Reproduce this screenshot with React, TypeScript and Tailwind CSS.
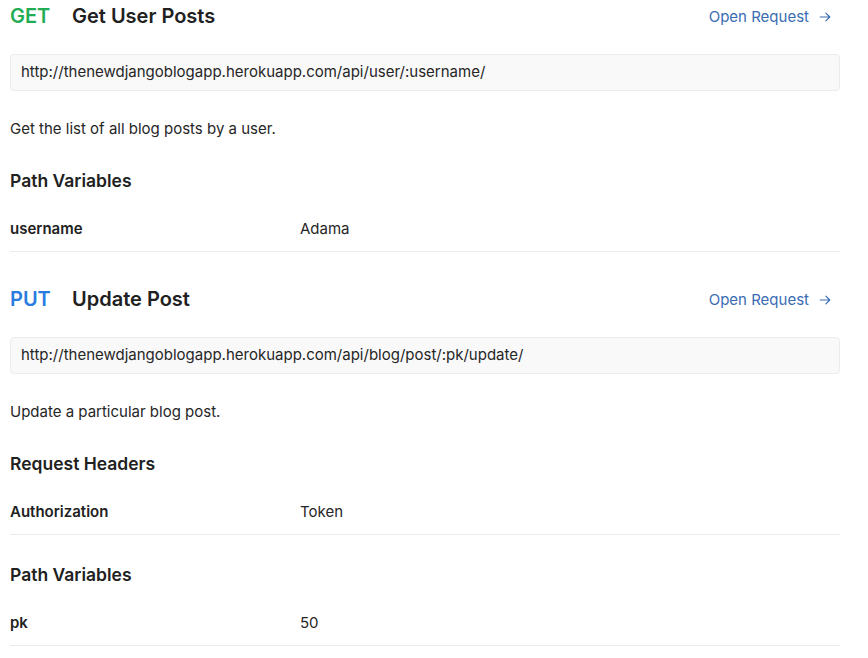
import React from 'react';

type Row = { key: string; value: string };

type Endpoint = {
  method: 'GET' | 'PUT';
  name: string;
  url: string;
  description: string;
  groups: { title: string; rows: Row[] }[];
};

const endpoints: Endpoint[] = [
  {
    method: 'GET',
    name: 'Get User Posts',
    url: 'http://thenewdjangoblogapp.herokuapp.com/api/user/:username/',
    description: 'Get the list of all blog posts by a user.',
    groups: [{ title: 'Path Variables', rows: [{ key: 'username', value: 'Adama' }] }],
  },
  {
    method: 'PUT',
    name: 'Update Post',
    url: 'http://thenewdjangoblogapp.herokuapp.com/api/blog/post/:pk/update/',
    description: 'Update a particular blog post.',
    groups: [
      { title: 'Request Headers', rows: [{ key: 'Authorization', value: 'Token' }] },
      { title: 'Path Variables', rows: [{ key: 'pk', value: '50' }] },
    ],
  },
];

const ArrowRight = () => (
  <svg className="h-[14px] w-[14px]" viewBox="0 0 16 16" fill="none" stroke="currentColor" strokeWidth={1.3}>
    <path d="M2.5 8h11M9 3.5 13.5 8 9 12.5" strokeLinecap="round" strokeLinejoin="round" />
  </svg>
);

const EndpointBlock = ({ ep, first }: { ep: Endpoint; first: boolean }) => (
  <section className={first ? '' : 'mt-[31px]'}>
    <div className="flex h-8 items-center justify-between">
      <div className="flex items-center">
        <span
          className={
            'w-[62px] text-[20px] font-semibold ' +
            (ep.method === 'GET' ? 'text-[#22ad55]' : 'text-[#2a7be0]')
          }
        >
          {ep.method}
        </span>
        <h2 className="text-[20px] font-semibold text-[#212121]">{ep.name}</h2>
      </div>
      <a className="mr-[8px] flex items-center gap-[9px] pt-[2px] text-[15px] text-[#3a6cb4]">
        Open Request
        <ArrowRight />
      </a>
    </div>

    <div className="mt-[22px] flex h-[37px] items-center rounded-[4px] border border-[#ececec] bg-[#f9f9f9] px-[10px] text-[15px] text-[#262626]">
      {ep.url}
    </div>

    <p className="mt-[28px] text-[15px] leading-5 text-[#262626]">{ep.description}</p>

    {ep.groups.map((g, i) => (
      <div key={g.title} className={i === 0 ? 'mt-[30px]' : 'mt-[28px]'}>
        <h3 className="text-[17.5px] font-semibold leading-6 text-[#212121]">{g.title}</h3>
        {g.rows.map((r) => (
          <div
            key={r.key}
            className="flex border-b border-[#ebebeb] pb-[12px] pt-[26px] text-[15px] leading-5 text-[#262626]"
          >
            <span className="w-[290px] font-semibold text-[#212121]">{r.key}</span>
            <span>{r.value}</span>
          </div>
        ))}
      </div>
    ))}
  </section>
);

export default function App() {
  return (
    <div
      className="min-h-screen bg-white"
      style={{ fontFamily: 'Inter, "Noto Sans", sans-serif' }}
    >
      <div className="w-[840px] pl-[10px]">
        {endpoints.map((ep, i) => (
          <EndpointBlock key={ep.name} ep={ep} first={i === 0} />
        ))}
      </div>
    </div>
  );
}
